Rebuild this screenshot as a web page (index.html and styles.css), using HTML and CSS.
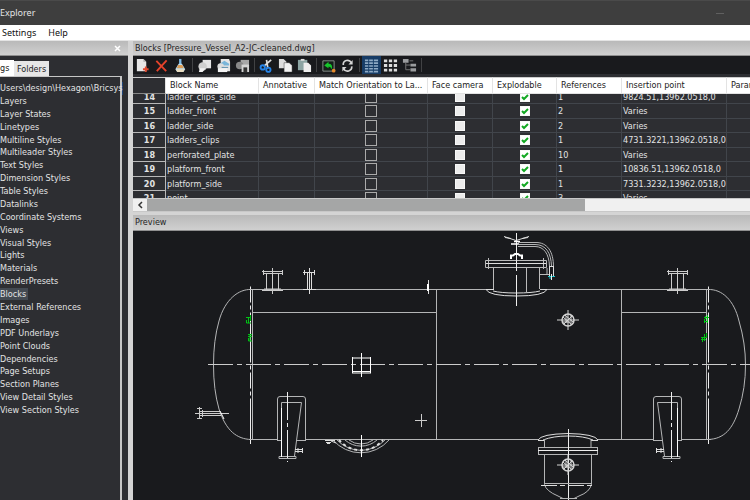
FILE: index.html
```html
<!DOCTYPE html>
<html lang="en">
<head>
<meta charset="utf-8">
<title>Drawing Explorer</title>
<link rel="stylesheet" href="styles.css">
</head>
<body>
<div class="window">
  <header class="titlebar">
    <span class="title">Explorer</span>
    <svg class="minimize" width="8" height="8" viewBox="0 0 8 8"><path d="M0 4.500H8" stroke="#606060"/></svg>
  </header>
  <nav class="menubar"><button>Settings</button><button>Help</button></nav>
  <main class="docks">
    <aside class="sidebar">
      <div class="caption caption-side"><button class="close" aria-label="Close"><svg width="7" height="7" viewBox="0 0 7 7"><path d="M1 1L6 6M6 1L1 6" stroke="#fff" stroke-width="1.5"/></svg></button></div>
      <div class="tabs"><button class="tab tab-active">gs</button><button class="tab">Folders</button></div>
      <ul class="tree">
        <li class="path"><span>Users\design\Hexagon\Bricsys</span></li>
        <li>Layers</li><li>Layer States</li><li>Linetypes</li><li>Multiline Styles</li><li>Multileader Styles</li><li>Text Styles</li><li>Dimension Styles</li><li>Table Styles</li><li>Datalinks</li><li>Coordinate Systems</li><li>Views</li><li>Visual Styles</li><li>Lights</li><li>Materials</li><li>RenderPresets</li><li class="selected"><span>Blocks</span></li><li>External References</li><li>Images</li><li>PDF Underlays</li><li>Point Clouds</li><li>Dependencies</li><li>Page Setups</li><li>Section Planes</li><li>View Detail Styles</li><li>View Section Styles</li>
      </ul>
    </aside>
    <section class="content">
      <h2 class="caption">Blocks [Pressure_Vessel_A2-JC-cleaned.dwg]</h2>
      <div class="toolbar">
        <button aria-label="New"><svg viewBox="0 0 16 16"><path d="M2 1H9L12 4V14H2Z" fill="#e6e6e6"/><path d="M9 1V4H12" fill="#aaa"/><path d="M11.500 9V15M8.500 12H14.500" stroke="#e04a30" stroke-width="2"/></svg></button>
        <button aria-label="Delete"><svg viewBox="0 0 16 16"><path d="M2.500 3L13 14M13.500 2.500L3 14" stroke="#e5432b" stroke-width="2"/></svg></button>
        <button aria-label="Purge"><svg viewBox="0 0 16 16"><path d="M6.500 1H9V7H6.500Z" fill="#7dbbe8"/><path d="M6 6H9.500L13 12L11 15H4.500L2.500 12Z" fill="#b9def2"/><path d="M5.500 7.500H10L11.500 11H4Z" fill="#d99a55"/><path d="M3 12H12.500L11 15H4.500Z" fill="#e8dcc0"/></svg></button>
        <i class="sep"></i>
        <button aria-label="Insert"><svg viewBox="0 0 16 16"><path d="M6 2H15V11H6Z" fill="#e5e5e5"/><circle cx="6" cy="9" r="4.500" fill="#cfcfcf"/><path d="M3 11H9L6 15H2Z" fill="#f2f2f2"/></svg></button>
        <button aria-label="Insert image"><svg viewBox="0 0 16 16"><path d="M5 1H14L15 4V14H5Z" fill="#e5e5e5"/><path d="M4 6L9 3L14 6V8H4Z" fill="#79b5d9"/><circle cx="5" cy="9" r="3.500" fill="#ddd"/><path d="M2 11H12V15H2Z" fill="#f3f3f3"/><path d="M6 10H13" stroke="#4f86a8"/></svg></button>
        <button aria-label="Save block"><svg viewBox="0 0 16 16"><path d="M6 2H15V9H6Z" fill="#a8a8a8"/><circle cx="5" cy="8" r="4" fill="#888"/><path d="M7 7H15V15H7Z" fill="#d5d5d5"/><path d="M9 10H13V15H9Z" fill="#333"/></svg></button>
        <i class="sep"></i>
        <button aria-label="Cut"><svg viewBox="0 0 16 16"><path d="M5 9L13 2M9.500 11L8 2" stroke="#ddd" stroke-width="1.800"/><circle cx="4" cy="10" r="2.300" fill="none" stroke="#2684e8" stroke-width="2"/><circle cx="10" cy="12.500" r="2.300" fill="none" stroke="#2684e8" stroke-width="2"/></svg></button>
        <button aria-label="Copy"><svg viewBox="0 0 16 16"><path d="M1 1H6L9 4V11H1Z" fill="#ddd"/><path d="M6.500 5H12L15 8V15H6.500Z" fill="#f2f2f2" stroke="#333" stroke-width=".5"/></svg></button>
        <button aria-label="Paste"><svg viewBox="0 0 16 16"><path d="M1 2H11V13H1Z" fill="#8ca4a3"/><path d="M4 1H8V3H4Z" fill="#ddd"/><path d="M7 5H12L15 8V15H7Z" fill="#eee"/></svg></button>
        <i class="sep"></i>
        <button aria-label="Regenerate"><svg viewBox="0 0 16 16"><path d="M2 3H14V14H2Z" fill="#142018" stroke="#8b9290"/><path d="M3.500 8L8 4V6Q13 6 11.500 12Q10.500 9 8 9V11Z" fill="#16c72b"/><circle cx="13.500" cy="13.500" r="2" fill="#e58a2b"/></svg></button>
        <button aria-label="Refresh"><svg viewBox="0 0 16 16"><path d="M3.500 7.500A4.500 4.500 0 0 1 12 5M12.500 9A4.500 4.500 0 0 1 4 11.500" fill="none" stroke="#d5d5d5" stroke-width="1.800"/><path d="M13.500 2V7H9ZM2.500 14.500V9.500H7Z" fill="#d5d5d5"/></svg></button>
        <i class="sep"></i>
        <button class="pressed" aria-label="Details"><svg viewBox="0 0 16 16"><path d="M1 2.500H15M1 5.500H15M1 8.500H15M1 11.500H15M1 14.500H15" stroke="#8fabc6" stroke-width="1.700"/><path d="M5 1V15.500M10 1V15.500" stroke="#16406b"/></svg></button>
        <button aria-label="Icons"><svg viewBox="0 0 16 16"><path d="M1 3H15M1 8H15M1 13H15" stroke="#ddd" stroke-width="3" stroke-dasharray="3.500 1.750"/></svg></button>
        <button aria-label="Tree view"><svg viewBox="0 0 16 16"><path d="M1 1H7V5H1ZM9 6H15V9H9ZM9 11H15V14.500H9Z" fill="#9a9c9e"/><path d="M4 5V12.500H9M4 7.500H9M8 3H12" fill="none" stroke="#777"/></svg></button>
        <i class="sep"></i>
      </div>
      <div class="grid-view">
        <table>
          <colgroup><col class="c-num"><col class="c-name"><col class="c-ann"><col class="c-match"><col class="c-face"><col class="c-exp"><col class="c-ref"><col class="c-ins"><col class="c-par"></colgroup>
          <thead><tr><th></th><th>Block Name</th><th>Annotative</th><th>Match Orientation to La...</th><th>Face camera</th><th>Explodable</th><th>References</th><th>Insertion point</th><th>Parametric</th></tr></thead>
          <tbody></tbody>
        </table>
      </div>
      <div class="scrollbar"><button aria-label="Scroll left"><svg width="6" height="8" viewBox="0 0 6 8"><path d="M5 1L2 4L5 7" fill="none" stroke="#333" stroke-width="1.500"/></svg></button><div class="thumb"></div></div>
      <h2 class="caption caption-preview">Preview</h2>
      <div class="preview">
        <svg viewBox="133 231 617 269" preserveAspectRatio="xMinYMin slice" fill="none" stroke="#b4b5b6">
          <defs>
            <g id="saddle"><path d="M277.500 440V399Q277.500 396.500 280 396.500H303Q305.500 396.500 305.500 399V440M277 440.500H282M296 440.500H306M281.500 456V402.500H301.500L294.500 456"/><path d="M279 456.500H296V458.500H279Z"/><path d="M281.500 408V457" stroke="#fff"/><path d="M287.500 392V462" stroke="#eee" stroke-dasharray="28 3 4 3"/><path d="M295 449.500H302M295 451.500H302M298 448V453M302.500 448V453" stroke="#ddd"/></g>
            <g id="nozzle"><path d="M263.500 270V275M262 271.500H283M264 273.500H282M282.500 270V275M266.500 274V290M278.500 274V290M262 290.500H283M264 289H281M272.500 268V294" stroke="#ccc"/></g>
            <g id="port" stroke="#d5d5d5"><circle r="6" stroke-width="1.500"/><path d="M-11 0H11M0-10V10M-5-3L4 5M-4 4L4-4M-3-5L5 2M-5 2H2M-2-4V3M3-5V5"/></g>
          </defs>
          <path d="M249 289.500H487M546 289.500H708M249 439.500H277M306 439.500H538M598 439.500H653M682 439.500H711M252.500 290V440M436.500 290V440M621.500 290V440M252 312.500H436M621 312.500H706M706.500 290V440"/>
          <path d="M250.500 286.500V444M708.500 286.500V444" stroke="#eee" stroke-dasharray="16 3 4 3 50 3 4 3"/>
          <path d="M251 289.500C239 289 225 299 219 321Q213.500 340 213.500 365Q213.500 390 219 409C226 431 237 439 251 439.500M708 289.500C722 289 734 300 739 321Q745.500 343 745.500 365Q745.500 388 739 409C733 429 724 439 708 439.500"/>
          <path d="M208 364.500H750" stroke="#ccc" stroke-dasharray="25 4 5 4"/>
          <use href="#nozzle"/><use href="#nozzle" x="405"/>
          <path d="M304.500 270V275M303 272.500H315M314.500 270V275M307.500 273V290M311.500 273V290M309.500 268V294M303 289.500H316M428.500 280V294" stroke="#ddd"/><path d="M428 284V291" stroke="#fff" stroke-width="2"/>
          <use href="#saddle"/><use href="#saddle" transform="translate(959 0) scale(-1 1)"/>
          <path d="M246 317.500H250M248.500 317V323M246.500 320V323H251M250.500 315V321M248 334.500H252M248 336.500H252M250 334V341M248.500 338V341H252M704 317.500H709M705.500 316V319M704 321.500H708M704.500 319V323M707.500 315V323M701 339.500H706M702.500 337V342M704.500 334V341M701 337.500H706M706.500 333V338" stroke="#00c414"/>
          <path d="M352.500 357V373M370.500 357V373M352 358H371M352 371.500H371M361.500 353V377M352 373H371" stroke="#fff"/>
          <path d="M415 420.500H427M421.500 414V427M195 413.500H229M199.500 407V419M202.500 410V417M197 408.500H202M197 418.500H202M200 411.500H220M200 415.500H221" stroke="#ccc"/>
          <path d="M220 411L224 419" stroke="#fff"/>
          <path d="M333 440A37 37 0 0 0 389 440M337 440A33 33 0 0 0 385 440M345 440A24 24 0 0 0 377 440M349 440A20 20 0 0 0 373 440"/>
          <path d="M339 440A30 32 0 0 0 383 440" stroke="#ddd" stroke-dasharray="3 3" stroke-width="2"/>
          <path d="M325 440.500H335M326 442.500H331M327 443.500H330M331 441L336 443" stroke="#ddd"/><path d="M361.500 435V457" stroke="#fff"/>
          <path d="M485.500 260.500H546.500V267.500H485.500ZM488.500 258V269M543.500 258V269M493.500 268V289M539.500 268V289M526.500 268V292M540 274.500H550M547 268V274" stroke="#bbb"/><path d="M486 263.500H546M486 289.500H494M540 289.500H547M486 289.500Q489 296 516.500 296Q544 296 547 289.500M493 291Q501 293 516 293Q532 293 540 291" stroke="#ddd"/>
          <path d="M516.500 233V306" stroke="#eee" stroke-dasharray="38 4 40"/><path d="M504 236.500L516 240.500L529 236.500M505 237.500L511 238.500M522 238.500L528 237.500" stroke="#ddd"/><path d="M511 259V255.500H513L515 254H518L520 255.500H522V259" stroke="#fff" stroke-width="2"/><path d="M511 244H519M514 241.500H520" stroke="#fff" stroke-width="1.500"/>
          <path d="M518 242.500H536C547 242.500 553.500 251 553.500 267M518 246.500H535C544 246.500 549 254 549.500 266M518 244.500H535C546 244.500 551 253 551.500 266"/><path d="M549.500 266V277M553.500 266V277M549 266.500H554" stroke="#ddd"/><path d="M548 276.500H555M549 278H552" stroke="#20cbd0"/><path d="M551.500 274V280" stroke="#eee"/>
          <path d="M538 440Q541 434 568 433.500Q595 434 598 440M543 440Q553 436 568 436Q584 436 593 440M538 440.500H545M591 440.500H598" stroke="#ddd"/>
          <path d="M544.500 439V447M591 439V447M538.500 447V455M597.500 447V455M539 447.500H597M539 454.500H597M544.500 455V484.500Q546 491 558 496L563 498.500H574L579 496Q590 492 591.500 484V455"/><path d="M538 450.500H598M568.500 429V500" stroke="#eee"/><path d="M541 485.500H595" stroke="#ddd" stroke-dasharray="16 3 5 3"/><path d="M544 483.500H591M560 498.500H577"/>
          <use href="#port" x="568" y="320"/><use href="#port" x="568" y="465"/>
        </svg>
      </div>
    </section>
  </main>
</div>
<script src="blocks.js"></script>
</body>
</html>
```
FILE: styles.css
```css
* { box-sizing: border-box; }
body { margin: 0; font: 9px/12px "DejaVu Sans Condensed", "DejaVu Sans", sans-serif; color: #e2e3e4; background: #d4d4d4; }
button { font: inherit; color: inherit; border: 0; padding: 0; margin: 0; background: none; display: flex; align-items: center; justify-content: center; }
.window { height: 100vh; display: flex; flex-direction: column; overflow: hidden; }
.titlebar { flex: none; height: 25px; display: flex; align-items: center; justify-content: space-between; padding-right: 26px; background: #3e3e3e; border-top: 1px solid #4a4a4a; font: 9px/14px "Noto Sans", sans-serif; }
.menubar { flex: none; height: 16px; display: flex; gap: 12px; padding-left: 2px; background: #fff; color: #111; border-bottom: 1px solid #e4e4e4; font: 9px/15px "Noto Sans", sans-serif; }
.docks { flex: 1; min-height: 0; display: flex; gap: 5px; }
.sidebar { flex: none; width: 128px; display: flex; flex-direction: column; background: #2d2e32; }
.caption { flex: none; margin: 0; height: 15px; padding-left: 2px; font-size: 9px; line-height: 14px; font-weight: 400; color: #242424; white-space: nowrap; background: linear-gradient(#b9b9b9, #d0d0d0); border-bottom: 1px solid #8f8f8f; }
.caption-side { display: flex; justify-content: flex-end; align-items: center; padding-right: 7px; }
.tabs { height: 20px; flex: none; display: flex; align-items: flex-end; }
.tab { height: 15px; width: 35px; background: #e6e6e6; color: #222; }
.tab-active { width: 14px; height: 16px; background: #fff; justify-content: flex-start; }
.tree { flex: 1; min-height: 0; margin: 0 6px 0 0; padding: 5px 0 83px; list-style: none; border: solid #c6c6c6; border-width: 1px 2px 0 0; display: grid; grid-template-rows: repeat(26, minmax(0, 1fr)); white-space: nowrap; }
.path { display: flex; justify-content: flex-end; padding-right: 4px; }
.path span { border-right: 1px solid #1d4478; }
.selected span { display: inline-block; padding-right: 2px; background: #434a52; }
.content { flex: 1; min-width: 0; display: flex; flex-direction: column; }
.toolbar { flex: none; height: 18px; display: flex; align-items: center; background: #191a1d; }
.toolbar button { width: 19px; height: 18px; }
.toolbar svg { width: 15px; height: 15px; }
.toolbar .pressed { background: #173c66; }
.sep { width: 1px; height: 14px; margin: 0 2px; background: #414244; }
.grid-view { flex: none; height: 124px; border-top: 3px solid #2d2e32; overflow: hidden; background: #2d2e32; }
table { width: 670px; border-collapse: separate; border-spacing: 0; table-layout: fixed; }
.c-num { width: 33px; } .c-name { width: 93px; } .c-ann { width: 56px; } .c-match { width: 113px; } .c-face { width: 65px; } .c-exp { width: 64px; } .c-ref { width: 65px; } .c-ins { width: 105px; } .c-par { width: 76px; }
th, td { padding: 0 0 0 1px; height: 15px; line-height: 13px; text-align: left; font-weight: 400; white-space: nowrap; border: solid #41454b; border-width: 0 1px 1px 0; }
thead th { position: sticky; top: 0; z-index: 1; height: 17px; padding-left: 4px; background: #fff; color: #222; border-color: #e3e3e3; border-top: 1px solid #ccc; }
thead th:first-child { background: #2d2e32; border-bottom-color: #888; }
tbody tr:nth-child(odd) > * { height: 14px; line-height: 12px; }
tbody th { text-align: center; font-weight: 700; border-color: #b8b8b8; }
.check { padding: 0; }
input { appearance: none; display: block; width: 10px; height: 10px; margin: 0 auto; background: #ececec; border: 1px solid #f8f8f8; }
.outline input { width: 12px; height: 12px; background: none; border-color: #aaa; }
.explodable input:checked { background: #fff url("data:image/svg+xml,%3Csvg xmlns='http://www.w3.org/2000/svg' viewBox='0 0 8 8'%3E%3Cpath d='M1 4L3 6L7 2' fill='none' stroke='%2312a822' stroke-width='2'/%3E%3C/svg%3E"); }
.scrollbar { flex: none; height: 14px; display: flex; background: #f0f0f0; border: solid #c8c8c8; border-width: 1px 0; }
.scrollbar button { width: 14px; background: #f0f0f0; }
.thumb { width: 71%; background: #a5a6a6; }
.caption-preview { margin-top: 3px; height: 16px; }
.preview { flex: 1; min-height: 0; background: #191a1d; }
.preview svg { display: block; width: 100%; height: 100%; }
```
FILE: blocks.js
```js
const blocks = [
  [14, 'ladder_clips_side', 1, '9824.51,13962.0518,0'],
  [15, 'ladder_front', 2, 'Varies'],
  [16, 'ladder_side', 2, 'Varies'],
  [17, 'ladders_clips', 1, '4731.3221,13962.0518,0'],
  [18, 'perforated_plate', 10, 'Varies'],
  [19, 'platform_front', 1, '10836.51,13962.0518,0'],
  [20, 'platform_side', 1, '7331.3232,13962.0518,0'],
  [21, 'point', 3, 'Varies'],
];

document.querySelector('tbody').innerHTML = blocks.map(([row, name, refs, point]) => `
  <tr><th>${row}</th><td>${name}</td><td></td>
  <td class="check outline"><input type="checkbox" aria-label="Match orientation of ${name}"></td>
  <td class="check"><input type="checkbox" aria-label="${name} faces camera"></td>
  <td class="check explodable"><input type="checkbox" checked aria-label="${name} explodable"></td>
  <td>${refs}</td><td>${point}</td><td></td></tr>`).join('');

// Open part-way through a row, with the header kept in view.
document.querySelector('.grid-view').scrollTop = 4;
```
